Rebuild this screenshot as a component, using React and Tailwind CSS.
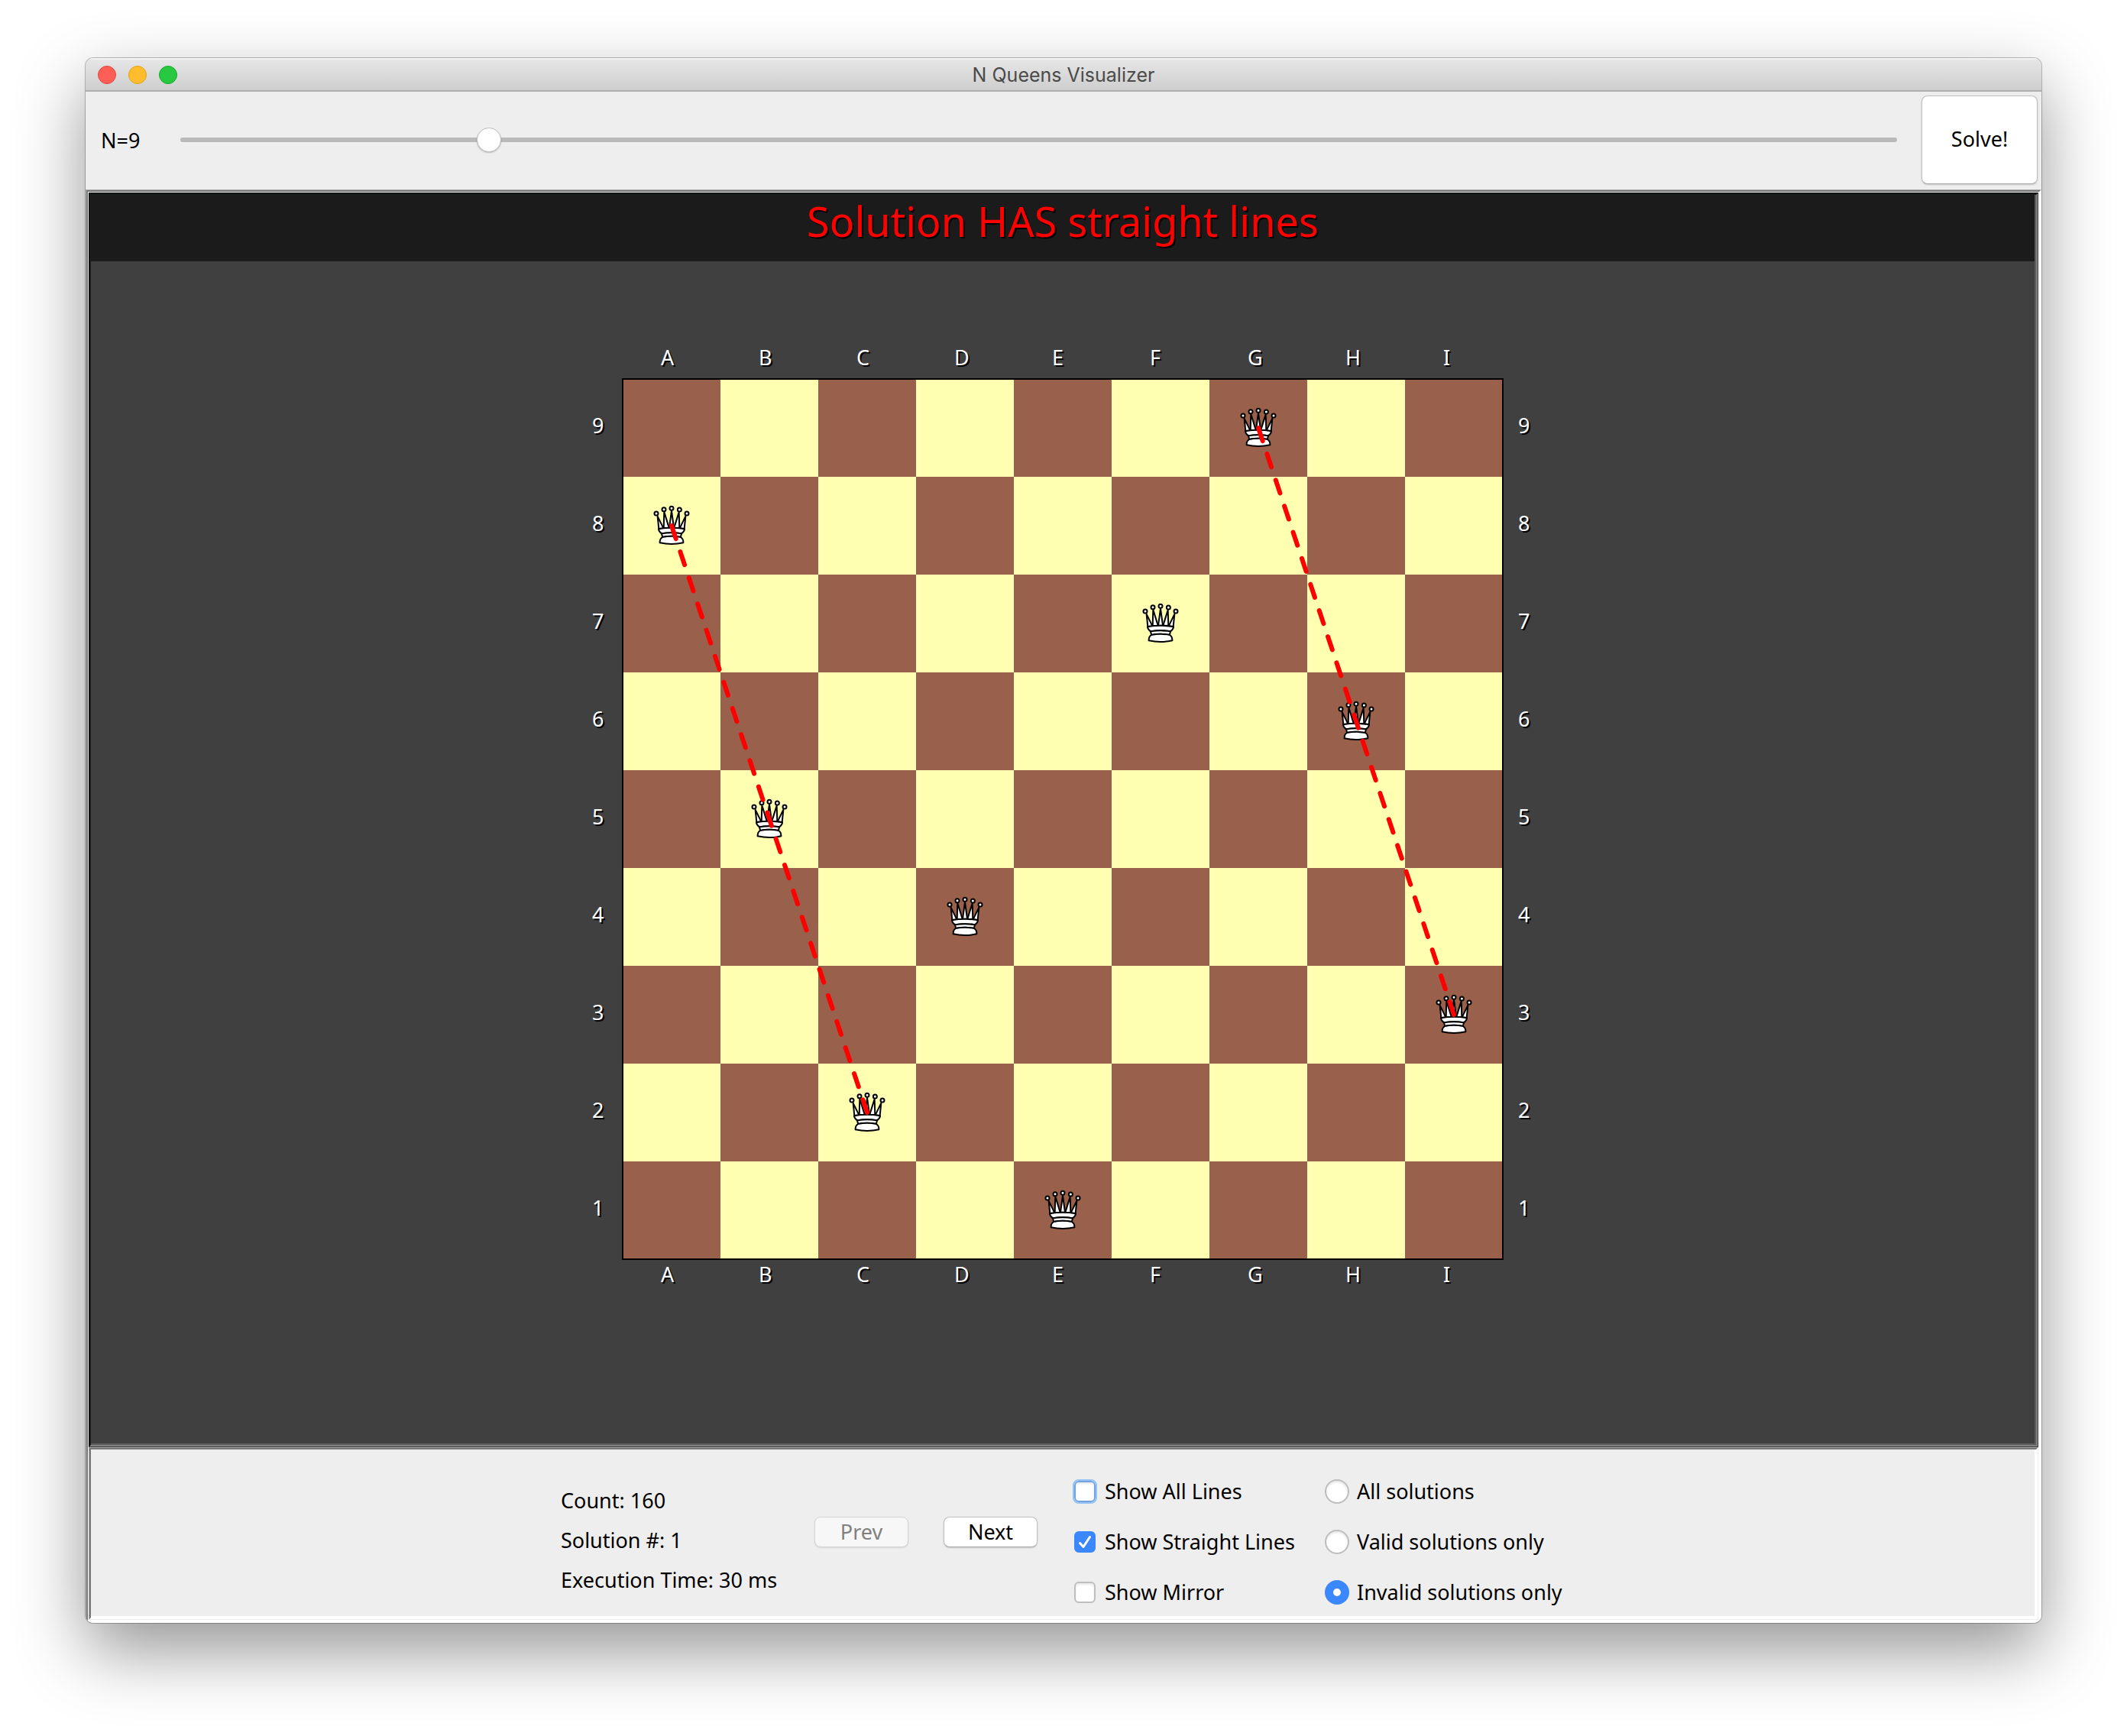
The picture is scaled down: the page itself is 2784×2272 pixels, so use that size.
import { useState } from "react";

const COLUMNS = ["A", "B", "C", "D", "E", "F", "G", "H", "I"];
const ROWS = [9, 8, 7, 6, 5, 4, 3, 2, 1];
const QUEENS = ["A8", "B5", "C2", "D4", "E1", "F7", "G9", "H6", "I3"];
const STRAIGHT_LINES = [
  ["A8", "C2"],
  ["G9", "I3"],
];
const CELL = 128;

function cellCenter(square) {
  return [
    COLUMNS.indexOf(square[0]) * CELL + CELL / 2,
    ROWS.indexOf(Number(square[1])) * CELL + CELL / 2,
  ];
}

function Queen() {
  return (
    <svg viewBox="168 84 144 168" className="h-14 w-12" fill="#fff" stroke="#000" strokeWidth="6" strokeLinejoin="round">
      <path d="M185 131 L190 180 L208 178 Z" />
      <path d="M295 131 L290 180 L272 178 Z" />
      <path d="M211 114 L209 177 L230 176 Z" />
      <path d="M269 115 L271 177 L250 176 Z" />
      <path d="M240 110 L231 176 L249 176 Z" />
      <circle cx="180" cy="120" r="7.5" />
      <circle cx="210" cy="104" r="7.5" />
      <circle cx="240" cy="100" r="7.5" />
      <circle cx="271" cy="105" r="7.5" />
      <circle cx="300" cy="120" r="7.5" />
      <path d="M189 181 Q240 172 291 181 Q291 190 279 199 Q240 193 201 199 Q189 190 189 181 Z" />
      <path d="M201 199 Q240 193 279 199 Q277 205 276 213 Q240 206 204 213 Q203 205 201 199 Z" />
      <path d="M204 213 Q240 206 276 213 Q287 220 286 235 Q240 245 194 235 Q193 220 204 213 Z" />
    </svg>
  );
}

function ColumnLabels() {
  return (
    <div className="grid grid-cols-9">
      {COLUMNS.map((c) => (
        <span key={c} className="pl-[50px] text-shadow-[2px_2px_0_#000]">{c}</span>
      ))}
    </div>
  );
}

function RowLabels() {
  return (
    <div className="grid w-10 grid-rows-9">
      {ROWS.map((r) => (
        <span key={r} className="flex h-32 items-center pb-1.5 text-shadow-[2px_2px_0_#000]">{r}</span>
      ))}
    </div>
  );
}

function Board({ showLines }) {
  return (
    <div className="grid grid-cols-[auto_auto_auto] text-white">
      <span />
      <div className="h-11">
        <ColumnLabels />
      </div>
      <span />
      <div className="pl-5">
        <RowLabels />
      </div>
      <div className="relative grid grid-cols-9 outline-2 -outline-offset-1 outline-black">
        {ROWS.map((r, y) =>
          COLUMNS.map((c, x) => (
            <div
              key={c + r}
              className={`flex size-32 items-center justify-center ${(x + y) % 2 ? "bg-[#ffffb2]" : "bg-[#99604b]"}`}
            >
              {QUEENS.includes(c + r) && <Queen />}
            </div>
          ))
        )}
        {showLines && (
          <svg viewBox="0 0 1152 1152" className="absolute inset-0 size-full" stroke="#f00" strokeWidth="6" strokeLinecap="round" strokeDasharray="18 18">
            {STRAIGHT_LINES.map(([from, to]) => {
              const [x1, y1] = cellCenter(from);
              const [x2, y2] = cellCenter(to);
              return <line key={from} x1={x1} y1={y1} x2={x2} y2={y2} />;
            })}
          </svg>
        )}
      </div>
      <div className="pl-5">
        <RowLabels />
      </div>
      <span />
      <div className="h-11 pt-1">
        <ColumnLabels />
      </div>
      <span />
    </div>
  );
}

function Check({ label, checked, onChange, focused }) {
  return (
    <label className="flex h-8 items-center gap-3">
      <span className="grid size-7 shrink-0">
        <input
          type="checkbox"
          checked={checked}
          onChange={(e) => onChange(e.target.checked)}
          className={`col-start-1 row-start-1 size-7 appearance-none rounded-md border-2 bg-white shadow-[inset_0_2px_3px_#0000001a] checked:border-[#3b87fd] checked:bg-[#3b87fd] checked:shadow-none ${
            focused ? "border-[#6ea5e0] outline-2 outline-[#97c3f3]" : "border-[#bdbdbd]"
          }`}
        />
        {checked && (
          <svg viewBox="0 0 28 28" className="pointer-events-none col-start-1 row-start-1 size-7" fill="none" stroke="#fff" strokeWidth="3" strokeLinecap="round" strokeLinejoin="round">
            <path d="M7.500 15.500 L12 20.500 L20.500 7.500" />
          </svg>
        )}
      </span>
      {label}
    </label>
  );
}

function Radio({ label, checked, onChange }) {
  return (
    <label className="flex h-8 items-center gap-2.5">
      <input
        type="radio"
        name="filter"
        checked={checked}
        onChange={onChange}
        className="size-8 shrink-0 appearance-none rounded-full border-2 border-[#bdbdbd] bg-white shadow-[inset_0_2px_3px_#0000001a] checked:border-[11px] checked:border-[#3b87fd] checked:shadow-none"
      />
      {label}
    </label>
  );
}

/* Sunken pane with a two-tone frame; the tone follows the colour of what it holds. */
function Pane({ dark, className, children }) {
  return (
    <div className={`flex border ${className ?? ""} ${dark ? "border-t-black border-r-[#404040] border-b-[#404040] border-l-black" : "border-t-[#a6a6a6] border-r-[#eee] border-b-[#eee] border-l-[#a6a6a6]"}`}>
      <div className={`flex flex-1 border-2 ${dark ? "border-t-[#1a1d1d] border-r-[#808080] border-b-[#808080] border-l-[#1a1d1d]" : "border-t-[#777] border-r-white border-b-white border-l-[#777]"}`}>
        <div className={`flex flex-1 flex-col border-r-2 border-b-2 ${dark ? "border-[#5c5c5c] bg-[#404040]" : "border-white bg-[#eee]"}`}>
          {children}
        </div>
      </div>
    </div>
  );
}

export default function App() {
  const [n, setN] = useState(9);
  const [allLines, setAllLines] = useState(false);
  const [straight, setStraight] = useState(true);
  const [mirror, setMirror] = useState(false);
  const [filter, setFilter] = useState("invalid");

  return (
    <div className="flex min-h-screen bg-white px-28 pt-[76px] pb-[148px] font-['Noto_Sans',sans-serif] text-[27px] leading-8 text-black">
      <div className="flex flex-1 flex-col overflow-hidden rounded-[10px] bg-[#eee] shadow-[0_0_0_1px_#00000040,0_36px_90px_#0000006b]">
        <header className="grid h-11 grid-cols-[1fr_auto_1fr] items-center border-t-2 border-b-2 border-t-[#f4f4f4] border-b-[#b0b0b0] bg-linear-to-b from-[#e6e6e6] to-[#cecece] px-4">
          <div className="flex gap-4">
            <button aria-label="Close" className="size-6 rounded-full border border-[#e2463f] bg-[#ff5f57]" />
            <button aria-label="Minimize" className="size-6 rounded-full border border-[#e1a116] bg-[#ffbd2e]" />
            <button aria-label="Zoom" className="size-6 rounded-full border border-[#12ac28] bg-[#28c940]" />
          </div>
          <h1 className="font-['Inter',sans-serif] text-[25px] text-[#4a4a4a]">N Queens Visualizer</h1>
        </header>

        <div className="flex h-32 items-center pr-[5px] pb-0.5 pl-5">
          <label htmlFor="n" className="w-26 pt-0.5">N={n}</label>
          <input
            id="n"
            type="range"
            min="2"
            max="42"
            value={n}
            onChange={(e) => setN(Number(e.target.value))}
            className="h-8 flex-1 appearance-none bg-transparent [&::-webkit-slider-runnable-track]:h-1.5 [&::-webkit-slider-runnable-track]:rounded-full [&::-webkit-slider-runnable-track]:bg-[#b9b9b9] [&::-webkit-slider-thumb]:-mt-[13px] [&::-webkit-slider-thumb]:size-8 [&::-webkit-slider-thumb]:appearance-none [&::-webkit-slider-thumb]:rounded-full [&::-webkit-slider-thumb]:border [&::-webkit-slider-thumb]:border-[#c4c4c4] [&::-webkit-slider-thumb]:bg-white [&::-webkit-slider-thumb]:shadow-[0_1px_2px_#00000040]"
          />
          <button className="ml-8 h-29 w-38 rounded-lg border border-[#c0c0c0] border-b-[#a8a8a8] bg-white pb-0.5 shadow-[0_1px_2px_#0000002e]">Solve!</button>
        </div>

        <main className="flex flex-1 border border-t-[#a6a6a6] border-r-white border-b-white border-l-[#b4b4b4]">
          <div className="flex flex-1 border-2 border-t-[#777] border-r-white border-b-white border-l-[#777]">
            <div className="flex flex-1 flex-col border border-white">
              <Pane dark className="flex-1">
                <h2 className="h-[87px] bg-[#1b1b1b] pt-0.5 text-center text-[54px] leading-16 text-[#f00] text-shadow-[2px_2px_0_#000]">
                  Solution HAS straight lines
                </h2>
                <div className="flex flex-1 items-center justify-center pb-[87px]">
                  <Board showLines={straight} />
                </div>
              </Pane>

              <Pane>
                <div className="flex items-center justify-center pt-[39px] pb-[15px]">
                  <div className="flex w-[332px] flex-col gap-5 pb-1">
                    <p>Count: 160</p>
                    <p>Solution #: 1</p>
                    <p>Execution Time: 30 ms</p>
                  </div>
                  <div className="flex w-[340px] gap-[46px] pb-[26px]">
                    <button disabled className="h-10 w-[123px] rounded-lg border border-[#d4d4d4] bg-[#f7f7f7] text-[#808080] shadow-[0_1px_2px_#0000001a]">Prev</button>
                    <button className="h-10 w-[123px] rounded-lg border border-[#c0c0c0] border-b-[#a8a8a8] bg-white shadow-[0_1px_2px_#0000002e]">Next</button>
                  </div>
                  <div className="flex w-[328px] flex-col gap-[34px]">
                    <Check label="Show All Lines" checked={allLines} onChange={setAllLines} focused />
                    <Check label="Show Straight Lines" checked={straight} onChange={setStraight} />
                    <Check label="Show Mirror" checked={mirror} onChange={setMirror} />
                  </div>
                  <div className="flex w-[314px] flex-col gap-[34px]">
                    <Radio label="All solutions" checked={filter === "all"} onChange={() => setFilter("all")} />
                    <Radio label="Valid solutions only" checked={filter === "valid"} onChange={() => setFilter("valid")} />
                    <Radio label="Invalid solutions only" checked={filter === "invalid"} onChange={() => setFilter("invalid")} />
                  </div>
                </div>
              </Pane>
            </div>
          </div>
        </main>
      </div>
    </div>
  );
}
